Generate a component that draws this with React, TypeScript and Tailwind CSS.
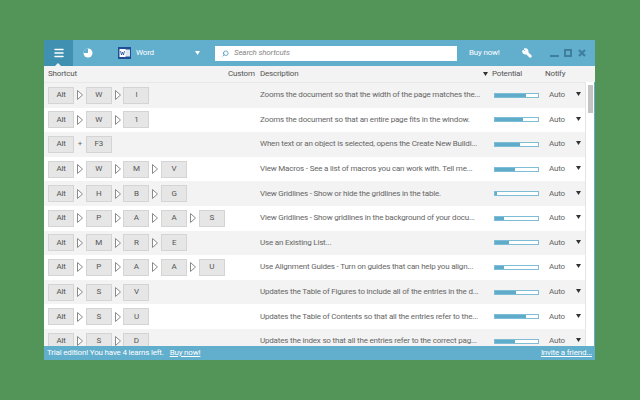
import { Menu, Search, Wrench } from "lucide-react"

interface Row {
  keys: string[]
  plus?: boolean
  text: string
  level: number
}

const ROWS: Row[] = [
  { keys: ["Alt", "W", "I"], text: "Zooms the document so that the width of the page matches the...", level: 72 },
  { keys: ["Alt", "W", "1"], text: "Zooms the document so that an entire page fits in the window.", level: 65 },
  { keys: ["Alt", "F3"], plus: true, text: "When text or an object is selected, opens the Create New Buildi...", level: 57 },
  { keys: ["Alt", "W", "M", "V"], text: "View Macros - See a list of macros you can work with.  Tell me...", level: 46 },
  { keys: ["Alt", "H", "B", "G"], text: "View Gridlines - Show or hide the gridlines in the table.", level: 4 },
  { keys: ["Alt", "P", "A", "A", "S"], text: "View Gridlines - Show gridlines in the background of your docu...", level: 22 },
  { keys: ["Alt", "M", "R", "E"], text: "Use an Existing List...", level: 33 },
  { keys: ["Alt", "P", "A", "A", "U"], text: "Use Alignment Guides - Turn on guides that can help you align...", level: 22 },
  { keys: ["Alt", "S", "V"], text: "Updates the Table of Figures to include all of the entries in the d...", level: 48 },
  { keys: ["Alt", "S", "U"], text: "Updates the Table of Contents so that all the entries refer to the...", level: 71 },
  { keys: ["Alt", "S", "D"], text: "Updates the index so that all the entries refer to the correct pag...", level: 46 },
]

function Key({ label }: { label: string }) {
  return (
    <span className="flex h-[17px] w-[26px] shrink-0 items-center justify-center border border-[#d4d4d4] bg-[#e6e6e6] text-[8px] text-[#555]">
      {label}
    </span>
  )
}

function Chevron() {
  return (
    <svg width="11.7" height="10" viewBox="0 0 11.7 10" className="shrink-0">
      <path d="M3.5 .5 L8.5 5 L3.5 9.5 Z" fill="#fff" stroke="#8a8a8a" strokeWidth="1" />
    </svg>
  )
}

function Caret({ className }: { className: string }) {
  return (
    <svg width="5" height="4" viewBox="0 0 5 4" className={className}>
      <path d="M0 0 H5 L2.5 4 Z" fill="currentColor" />
    </svg>
  )
}

function ShortcutRow({ row, odd }: { row: Row; odd: boolean }) {
  return (
    <div className={`flex h-[24.6px] shrink-0 items-center ${odd ? "bg-[#f3f3f3]" : "bg-white"}`}>
      <div className="flex w-[216px] shrink-0 items-center pl-[4px]">
        {row.keys.map((key, i) => (
          <div key={i} className="flex items-center">
            {i > 0 &&
              (row.plus ? (
                <span className="w-[11.7px] text-center text-[8px] text-[#666]">+</span>
              ) : (
                <Chevron />
              ))}
            <Key label={key} />
          </div>
        ))}
      </div>
      <div className="w-[234px] shrink-0 whitespace-nowrap text-[8px] text-[#666]">{row.text}</div>
      <div className="flex h-[5px] w-[45px] shrink-0 border border-[#7fbdd6] bg-white">
        <div className="h-full bg-[#5fabca]" style={{ width: `${row.level}%` }} />
      </div>
      <span className="ml-[10px] w-[27px] shrink-0 text-[8px] text-[#666]">Auto</span>
      <Caret className="mb-[2px] shrink-0 text-[#333]" />
    </div>
  )
}

export default function App() {
  return (
    <main className="flex h-[400px] w-[640px] items-start bg-[#539558] pl-[44px] pt-[40px] font-['Roboto',sans-serif] tracking-[-0.19px]">
      <div className="flex h-[320px] w-[551px] flex-col overflow-hidden bg-white">
        <header className="flex h-[26px] shrink-0 items-center bg-[#62aecd] text-white">
          <div className="relative flex h-full w-[29px] shrink-0 items-center justify-center bg-[#3f90b1]">
            <Menu size={12} strokeWidth={3} />
            <span className="absolute bottom-0 left-[11px] border-x-[3px] border-b-[3px] border-x-transparent border-b-[#f3f3f3]" />
          </div>
          <svg width="10" height="10" viewBox="0 0 10 10" className="ml-[10px] shrink-0">
            <circle cx="5" cy="5" r="4.5" fill="#fff" />
            <path d="M5 5 V.5 A4.5 4.5 0 0 0 .5 5 Z" fill="#62aecd" />
          </svg>
          <svg width="13" height="12" viewBox="0 0 13 12" className="ml-[25px] shrink-0">
            <rect width="13" height="12" fill="#1f4e96" />
            <rect x="6" y="2.5" width="6" height="7" fill="#dbe5f2" />
            <rect x="1.5" y="2" width="6" height="8" fill="#fff" />
            <path d="M2.5 4 L3.5 8 L4.5 5 L5.5 8 L6.5 4" fill="none" stroke="#1f4e96" strokeWidth=".8" />
          </svg>
          <span className="ml-[5px] w-[59px] shrink-0 text-[8px]">Word</span>
          <Caret className="shrink-0 text-white" />
          <div className="ml-[15px] flex h-[15px] w-[242px] shrink-0 items-center bg-white pl-[7px]">
            <Search size={7} strokeWidth={2.5} className="-scale-x-100 text-[#3f90b1]" />
            <span className="ml-[5px] text-[8px] italic text-[#888]">Search shortcuts</span>
          </div>
          <span className="ml-[12px] w-[32px] shrink-0 whitespace-nowrap text-[8px]">Buy now!</span>
          <Wrench size={10} strokeWidth={3} fill="#fff" className="ml-[21px] shrink-0 -scale-x-100" />
          <span className="ml-[18px] mt-[6px] h-[2px] w-[9px] shrink-0 bg-[#3f7f9d]" />
          <span className="ml-[5px] h-[8px] w-[8px] shrink-0 border-2 border-[#3f7f9d]" />
          <svg width="8" height="8" viewBox="0 0 8 8" className="ml-[6px] shrink-0">
            <path d="M1 1 L7 7 M7 1 L1 7" stroke="#3f7f9d" strokeWidth="2.2" />
          </svg>
        </header>
        <div className="flex h-[16px] shrink-0 items-center bg-[#f3f3f3] text-[8px] text-[#555]">
          <span className="w-[184px] pl-[4px]">Shortcut</span>
          <span className="w-[32px]">Custom</span>
          <span className="w-[223px]">Description</span>
          <Caret className="text-[#333]" />
          <span className="ml-[4px] w-[53px]">Potential</span>
          <span>Notify</span>
        </div>
        <div className="flex min-h-0 flex-1 overflow-hidden">
          <div className="flex w-[541px] shrink-0 flex-col overflow-hidden border-t border-[#e8e8e8]">
            {ROWS.map((row, i) => (
              <ShortcutRow key={i} row={row} odd={i % 2 === 0} />
            ))}
          </div>
          <div className="flex-1 border-x border-x-[#e4e4e4] border-r-[#62aecd] bg-white pl-[2px] pt-[3px]">
            <div className="h-[28px] w-[5px] bg-[#c4c4c4]" />
          </div>
        </div>
        <footer className="flex h-[14px] shrink-0 items-center justify-between bg-[#62aecd] pl-[3px] pr-[3px] text-[8px] text-white">
          <span>
            Trial edition! You have 4 learns left.
            <span className="ml-[6px] underline">Buy now!</span>
          </span>
          <span className="underline">Invite a friend...</span>
        </footer>
      </div>
    </main>
  )
}
